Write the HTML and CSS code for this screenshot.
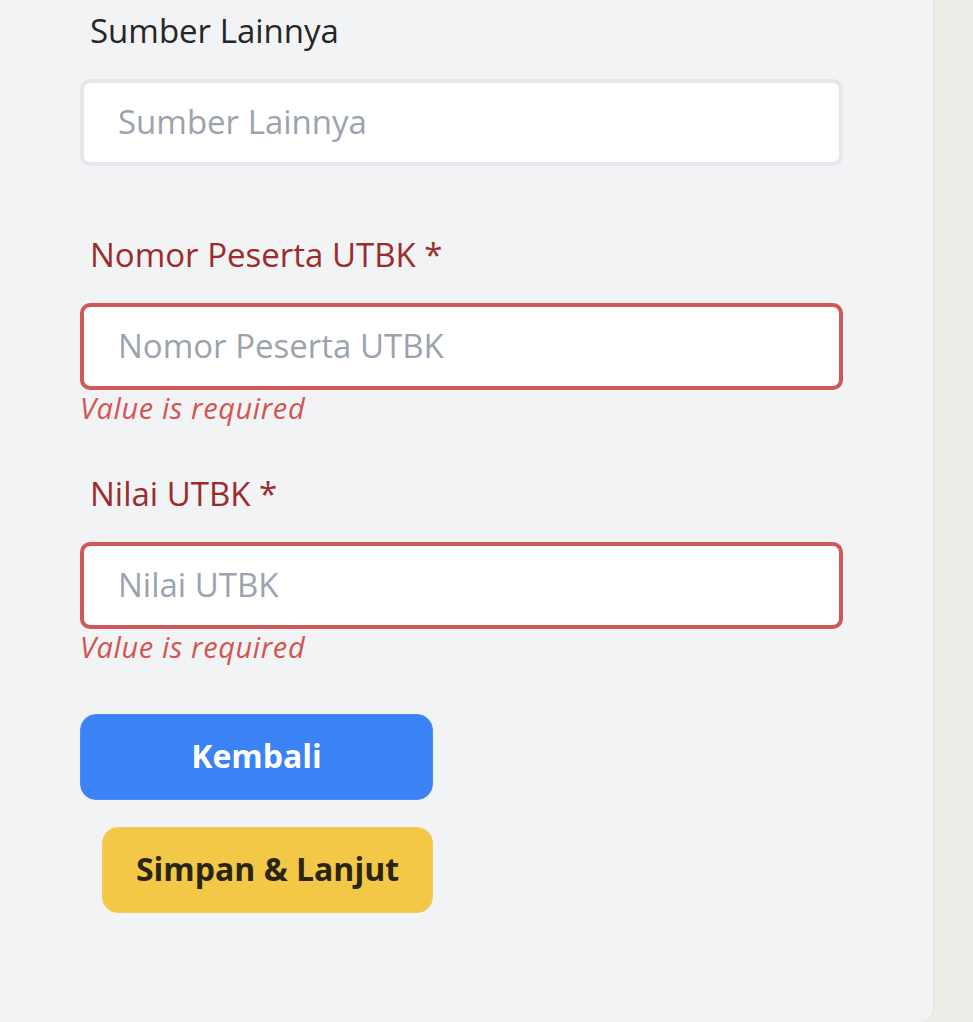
FILE: index.html
```html
<!DOCTYPE html>
<html lang="id">
<head>
<meta charset="utf-8">
<title>Form UTBK</title>
<link rel="stylesheet" href="styles.css">
</head>
<body>
<div class="panel">
  <form class="form">
    <div class="field">
      <label class="label">Sumber Lainnya</label>
      <input class="input" type="text" placeholder="Sumber Lainnya">
    </div>
    <div class="field field-error">
      <label class="label label-error">Nomor Peserta UTBK *</label>
      <input class="input input-error" type="text" placeholder="Nomor Peserta UTBK">
      <div class="error">Value is required</div>
    </div>
    <div class="field field-error">
      <label class="label label-error">Nilai UTBK *</label>
      <input class="input input-error" type="text" placeholder="Nilai UTBK">
      <div class="error">Value is required</div>
    </div>
    <div class="actions">
      <button type="button" class="btn btn-blue">Kembali</button>
      <button type="button" class="btn btn-yellow">Simpan &amp; Lanjut</button>
    </div>
  </form>
</div>
</body>
</html>
```
FILE: styles.css
```css
html, body {
  margin: 0;
  padding: 0;
}
body {
  background: #eeeee9;
  font-family: "Open Sans", "Liberation Sans", sans-serif;
  height: 1022px;
  overflow: hidden;
}
.panel {
  width: 933px;
  height: 1022px;
  background: #f2f3f5;
  border-bottom-right-radius: 14px;
  box-shadow: 1px 0 3px rgba(0, 0, 0, 0.06);
}
.form {
  padding: 8px 0 0 80px;
  width: 763px;
  display: flex;
  flex-direction: column;
}
.field {
  display: flex;
  flex-direction: column;
  margin-bottom: 66px;
}
.field-error {
  margin-bottom: 45px;
}
.label {
  padding-left: 10px;
  font-size: 33px;
  line-height: 45px;
  color: #262626;
  margin-bottom: 26px;
}
.label-error {
  color: #9b2c2c;
}
.input {
  box-sizing: border-box;
  width: 763px;
  height: 87px;
  border: 4px solid #e5e7eb;
  border-radius: 10px;
  background: #ffffff;
  padding: 0 0 2px 34px;
  font-family: inherit;
  font-size: 33px;
  color: #333;
  outline: none;
}
.input::placeholder {
  color: #9ca3af;
}
.input-error {
  border: 4px solid #cf5858;
}
.error {
  font-style: italic;
  font-size: 29px;
  letter-spacing: 0.6px;
  line-height: 36px;
  color: #d25552;
}
.actions {
  width: 353px;
  display: flex;
  flex-direction: column;
  align-items: flex-end;
  gap: 27px;
  margin-top: 4px;
}
.btn {
  box-sizing: border-box;
  height: 86px;
  border: 1px solid transparent;
  border-radius: 16px;
  font-family: inherit;
  font-weight: 700;
  font-size: 32px;
  padding: 0 0 3px 0;
  cursor: pointer;
}
.btn-blue {
  width: 353px;
  background: #3b82f6;
  border-color: #4a8cf5;
  color: #ffffff;
}
.btn-yellow {
  width: 331px;
  background: #f3c846;
  border-color: #f0cc5a;
  color: #2a2512;
}
```
